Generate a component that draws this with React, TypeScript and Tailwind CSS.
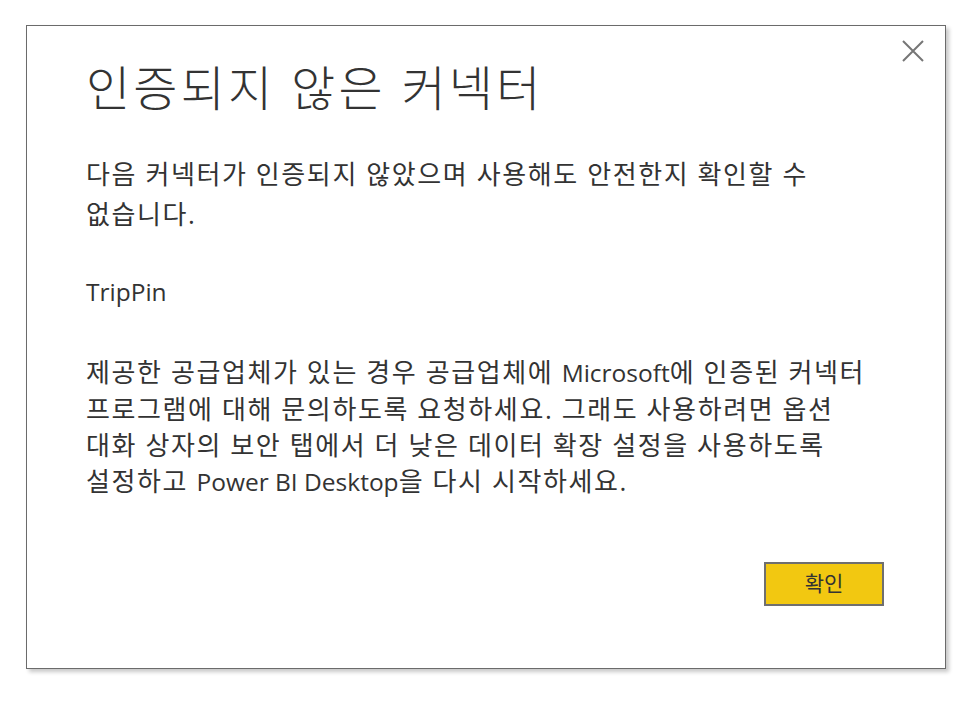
import React from "react";

const font = {
  fontFamily: '"Open Sans", "Noto Sans CJK KR", sans-serif',
};

function CloseIcon() {
  return (
    <svg width="22" height="22" viewBox="0 0 22 22" className="block">
      <path d="M1 1 L21 21 M21 1 L1 21" stroke="#767676" strokeWidth="2" fill="none" />
    </svg>
  );
}

// Latin words are set a touch smaller and without the Hangul tracking
function En({ children }: { children: React.ReactNode }) {
  return <span className="text-[24.5px] tracking-normal">{children}</span>;
}

export default function App() {
  return (
    <div className="w-[978px] h-[705px] bg-white pt-[25px] pl-[26px]" style={font}>
      <div className="relative w-[920px] h-[644px] bg-white border border-[#6b6b6b] shadow-[3px_3px_4px_rgba(0,0,0,0.22)] pl-[59px] pr-[40px] text-[#333333]">
        <button className="absolute top-[14px] right-[21px] p-0">
          <CloseIcon />
        </button>

        <h1 className="mt-[32px] text-[48px] leading-[60px] font-light tracking-[3.2px]">
          인증되지 않은 커넥터
        </h1>

        <div className="text-[26px] tracking-[1.6px]">
          <p className="mt-[36px] leading-[40px]">
            다음 커넥터가 인증되지 않았으며 사용해도 안전한지 확인할 수
            <br />
            없습니다.
          </p>
          <p className="mt-[37px] leading-[40px]">
            <En>TripPin</En>
          </p>
          <p className="mt-[42px] leading-[36px]">
            제공한 공급업체가 있는 경우 공급업체에 <En>Microsoft</En>에 인증된 커넥터
            <br />
            프로그램에 대해 문의하도록 요청하세요. 그래도 사용하려면 옵션
            <br />
            대화 상자의 보안 탭에서 더 낮은 데이터 확장 설정을 사용하도록
            <br />
            설정하고 <En>Power BI Desktop</En>을 다시 시작하세요.
          </p>
        </div>

        <div className="flex justify-end mt-[62px] pr-[21px]">
          <button className="w-[120px] h-[44px] bg-[#f2c811] border-2 border-[#6f6f6f] text-[21px] text-[#333333] flex items-center justify-center">
            확인
          </button>
        </div>
      </div>
    </div>
  );
}
